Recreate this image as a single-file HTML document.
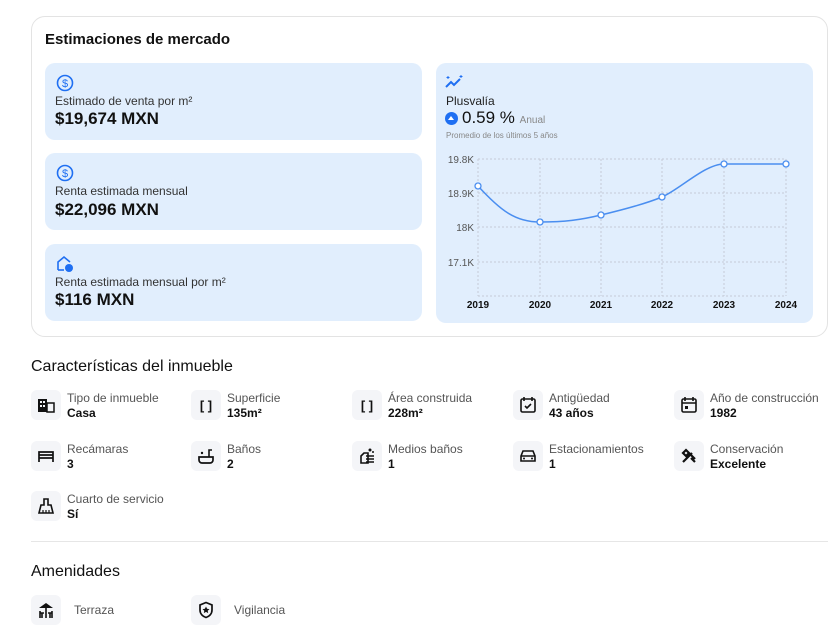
<!DOCTYPE html>
<html><head><meta charset="utf-8"><style>
*{margin:0;padding:0;box-sizing:border-box}
body{width:840px;height:630px;overflow:hidden;background:#fff;font-family:"Liberation Sans",sans-serif;color:#111;position:relative}
.abs{position:absolute}
.card{position:absolute;left:31px;top:16px;width:797px;height:321px;border:1px solid #e3e3e3;border-radius:14px}
.bc{position:absolute;background:#e1eefd;border-radius:10px}
.lab{font-size:12px;color:#333}
.val{font-size:17px;font-weight:bold;color:#111}
.ib{position:absolute;width:30px;height:30px;background:#f4f5f8;border-radius:6px;display:flex;align-items:center;justify-content:center}
.t1{position:absolute;font-size:12px;color:#555}
.t2{position:absolute;font-size:12px;font-weight:bold;color:#111}
h2{position:absolute;font-size:16px;font-weight:normal;color:#111}
</style></head><body>
<div class="card"></div>
<h2 style="left:45px;top:31px;font-weight:bold;font-size:15px">Estimaciones de mercado</h2>

<div class="bc" style="left:45px;top:63px;width:377px;height:77px"></div>
<svg class="abs" style="left:56px;top:74px" width="18" height="18" viewBox="0 0 18 18"><circle cx="9" cy="9" r="7.5" fill="none" stroke="#1f6ff2" stroke-width="1.6"/><text x="9" y="13" font-size="11" text-anchor="middle" fill="#1f6ff2" font-family="Liberation Sans">$</text></svg>
<div class="abs lab" style="left:55px;top:94px">Estimado de venta por m²</div>
<div class="abs val" style="left:55px;top:109px">$19,674 MXN</div>

<div class="bc" style="left:45px;top:153px;width:377px;height:77px"></div>
<svg class="abs" style="left:56px;top:164px" width="18" height="18" viewBox="0 0 18 18"><circle cx="9" cy="9" r="7.5" fill="none" stroke="#1f6ff2" stroke-width="1.6"/><text x="9" y="13" font-size="11" text-anchor="middle" fill="#1f6ff2" font-family="Liberation Sans">$</text></svg>
<div class="abs lab" style="left:55px;top:184px">Renta estimada mensual</div>
<div class="abs val" style="left:55px;top:200px">$22,096 MXN</div>

<div class="bc" style="left:45px;top:244px;width:377px;height:77px"></div>
<svg class="abs" style="left:56px;top:255px" width="18" height="18" viewBox="0 0 18 18"><path d="M2 15V7l6-5 6 5" fill="none" stroke="#1f6ff2" stroke-width="1.6"/><path d="M2 15h6" stroke="#1f6ff2" stroke-width="1.6"/><circle cx="13" cy="13" r="4" fill="#1f6ff2"/></svg>
<div class="abs lab" style="left:55px;top:275px">Renta estimada mensual por m²</div>
<div class="abs val" style="left:55px;top:290px">$116 MXN</div>

<div class="bc" style="left:436px;top:63px;width:377px;height:260px"></div>
<svg class="abs" style="left:445px;top:74px" width="20" height="16" viewBox="0 0 20 16"><path d="M1 13l5-5 3 3 6-6" fill="none" stroke="#1f6ff2" stroke-width="2"/><path d="M3 2v3M1.5 3.5h3M16 1v3M14.5 2.5h3" stroke="#1f6ff2" stroke-width="1"/></svg>
<div class="abs" style="left:446px;top:94px;font-size:12px;color:#222">Plusvalía</div>
<div class="abs" style="left:445px;top:112px;width:13px;height:13px;border-radius:50%;background:#1f6ff2"></div>
<div class="abs" style="left:448px;top:116px;width:0;height:0;border-left:3.5px solid transparent;border-right:3.5px solid transparent;border-bottom:4px solid #fff"></div>
<div class="abs" style="left:462px;top:108px;font-size:17px;color:#111">0.59 % <span style="font-size:10px;color:#888">Anual</span></div>
<div class="abs" style="left:446px;top:131px;font-size:8px;color:#888">Promedio de los últimos 5 años</div>
<svg class="abs" style="left:436px;top:140px" width="377" height="180" viewBox="436 140 377 180">
<g stroke="#c5cbd6" stroke-dasharray="2 2" stroke-width="1" fill="none">
<path d="M478 159H786M478 193H786M478 227H786M478 262H786M478 296H786"/>
<path d="M478 159V296M540 159V296M601 159V296M662 159V296M724 159V296M786 159V296"/>
</g>
<g font-size="10" fill="#555" font-family="Liberation Sans" text-anchor="end">
<text x="474" y="163">19.8K</text><text x="474" y="197">18.9K</text><text x="474" y="231">18K</text><text x="474" y="266">17.1K</text></g>
<g font-size="10" fill="#111" font-weight="bold" font-family="Liberation Sans" text-anchor="middle">
<text x="478" y="308">2019</text><text x="540" y="308">2020</text><text x="601" y="308">2021</text><text x="662" y="308">2022</text><text x="724" y="308">2023</text><text x="786" y="308">2024</text></g>
<path d="M478 186C500 210 515 222 540 222S580 220 601 215S645 204 662 197S705 164 724 164H786" fill="none" stroke="#4a8ef0" stroke-width="1.5"/>
<g fill="#fff" stroke="#4a8ef0" stroke-width="1.3"><circle cx="478" cy="186" r="3"/><circle cx="540" cy="222" r="3"/><circle cx="601" cy="215" r="3"/><circle cx="662" cy="197" r="3"/><circle cx="724" cy="164" r="3"/><circle cx="786" cy="164" r="3"/></g>
</svg>

<h2 style="left:31px;top:358px">Características del inmueble</h2>

<div class="ib" style="left:31px;top:390px"><svg width="18" height="16"><rect x="1" y="2" width="9" height="13" fill="#111"/><rect x="10" y="6" width="7" height="9" fill="none" stroke="#111" stroke-width="1.5"/><g fill="#f4f5f8"><rect x="3" y="4" width="2" height="2"/><rect x="6" y="4" width="2" height="2"/><rect x="3" y="8" width="2" height="2"/><rect x="6" y="8" width="2" height="2"/></g></svg></div>
<div class="t1" style="left:67px;top:391px">Tipo de inmueble</div><div class="t2" style="left:67px;top:406px">Casa</div>
<div class="ib" style="left:191px;top:390px;font-weight:bold;font-size:13px">[ ]</div>
<div class="t1" style="left:227px;top:391px">Superficie</div><div class="t2" style="left:227px;top:406px">135m²</div>
<div class="ib" style="left:352px;top:390px;font-weight:bold;font-size:13px">[ ]</div>
<div class="t1" style="left:388px;top:391px">Área construida</div><div class="t2" style="left:388px;top:406px">228m²</div>
<div class="ib" style="left:513px;top:390px"><svg width="18" height="18"><rect x="2" y="3" width="14" height="13" rx="1.5" fill="none" stroke="#111" stroke-width="1.6"/><path d="M5 1v4M13 1v4M6 10l2 2 4-4" stroke="#111" stroke-width="1.6" fill="none"/></svg></div>
<div class="t1" style="left:549px;top:391px">Antigüedad</div><div class="t2" style="left:549px;top:406px">43 años</div>
<div class="ib" style="left:674px;top:390px"><svg width="18" height="18"><rect x="2" y="3" width="14" height="13" rx="1.5" fill="none" stroke="#111" stroke-width="1.6"/><path d="M5 1v4M13 1v4M2 7h14" stroke="#111" stroke-width="1.6"/><rect x="5" y="10" width="3" height="3" fill="#111"/></svg></div>
<div class="t1" style="left:710px;top:391px">Año de construcción</div><div class="t2" style="left:710px;top:406px">1982</div>

<div class="ib" style="left:31px;top:441px"><svg width="18" height="14"><path d="M2 13V3h14v10M2 9h14M2 6h14" fill="none" stroke="#111" stroke-width="1.7"/></svg></div>
<div class="t1" style="left:67px;top:442px">Recámaras</div><div class="t2" style="left:67px;top:457px">3</div>
<div class="ib" style="left:191px;top:441px"><svg width="18" height="18"><path d="M2 10h14v3a3 3 0 0 1-3 3H5a3 3 0 0 1-3-3z" fill="none" stroke="#111" stroke-width="1.7"/><path d="M12 10V3h3" stroke="#111" stroke-width="1.6" fill="none"/><circle cx="5" cy="6" r="1.2" fill="#111"/></svg></div>
<div class="t1" style="left:227px;top:442px">Baños</div><div class="t2" style="left:227px;top:457px">2</div>
<div class="ib" style="left:352px;top:441px"><svg width="18" height="18"><path d="M3 16V9l3-3h4v10z" fill="none" stroke="#111" stroke-width="1.6"/><path d="M8 9h8M8 12h8M8 15h8" stroke="#111" stroke-width="1.5"/><circle cx="12" cy="3" r="1.5" fill="#111"/><circle cx="15" cy="5" r="1" fill="#111"/></svg></div>
<div class="t1" style="left:388px;top:442px">Medios baños</div><div class="t2" style="left:388px;top:457px">1</div>
<div class="ib" style="left:513px;top:441px"><svg width="18" height="16"><path d="M2 13V8l2-5h10l2 5v5z" fill="none" stroke="#111" stroke-width="1.6"/><path d="M2 8h14" stroke="#111" stroke-width="1.5"/><circle cx="5" cy="10.5" r="1" fill="#111"/><circle cx="13" cy="10.5" r="1" fill="#111"/></svg></div>
<div class="t1" style="left:549px;top:442px">Estacionamientos</div><div class="t2" style="left:549px;top:457px">1</div>
<div class="ib" style="left:674px;top:441px"><svg width="18" height="18"><path d="M3 15l9-9M6 3l9 9M15 15l-4-4M3 6l3-3 3 3-3 3z" stroke="#111" stroke-width="2.2" fill="none"/></svg></div>
<div class="t1" style="left:710px;top:442px">Conservación</div><div class="t2" style="left:710px;top:457px">Excelente</div>

<div class="ib" style="left:31px;top:491px"><svg width="18" height="18"><path d="M7 2h4v6h3l2 8H2l2-8h3z" fill="none" stroke="#111" stroke-width="1.6"/><path d="M6 13v3M9 13v3M12 13v3" stroke="#111" stroke-width="1.2"/></svg></div>
<div class="t1" style="left:67px;top:492px">Cuarto de servicio</div><div class="t2" style="left:67px;top:507px">Sí</div>

<div class="abs" style="left:31px;top:541px;width:797px;height:1px;background:#e6e6e6"></div>
<h2 style="left:31px;top:563px">Amenidades</h2>
<div class="ib" style="left:31px;top:595px"><svg width="18" height="18"><path d="M2 7l7-5 7 5z" fill="#111"/><path d="M9 7v10M3 10v7M15 10v7M5 12v5M13 12v5M3 12h4M11 12h4" stroke="#111" stroke-width="1.6"/></svg></div>
<div class="t1" style="left:74px;top:603px">Terraza</div>
<div class="ib" style="left:191px;top:595px"><svg width="18" height="18"><path d="M9 1.5l6 2.5v5c0 4-3 6.5-6 7.5-3-1-6-3.5-6-7.5V4z" fill="none" stroke="#111" stroke-width="1.7"/><path d="M9 5.5l1.1 2.3 2.4.3-1.8 1.6.5 2.4L9 10.9l-2.2 1.2.5-2.4-1.8-1.6 2.4-.3z" fill="#111"/></svg></div>
<div class="t1" style="left:234px;top:603px">Vigilancia</div>
</body></html>
